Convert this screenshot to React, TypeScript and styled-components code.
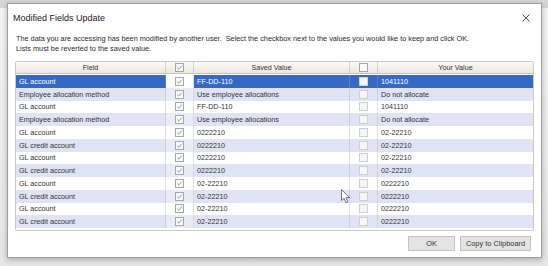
import styled, { createGlobalStyle } from "styled-components";

const GlobalStyle = createGlobalStyle`
  html, body {
    margin: 0;
    padding: 0;
    width: 548px;
    height: 266px;
    overflow: hidden;
    background: #ececec;
  }
  * {
    box-sizing: border-box;
  }
`;

type RowData = {
  field: string;
  saved: string;
  yours: string;
};

const rows: RowData[] = [
  { field: "GL account", saved: "FF-DD-110", yours: "1041110" },
  { field: "Employee allocation method", saved: "Use employee allocations", yours: "Do not allocate" },
  { field: "GL account", saved: "FF-DD-110", yours: "1041110" },
  { field: "Employee allocation method", saved: "Use employee allocations", yours: "Do not allocate" },
  { field: "GL account", saved: "0222210", yours: "02-22210" },
  { field: "GL credit account", saved: "0222210", yours: "02-22210" },
  { field: "GL account", saved: "0222210", yours: "02-22210" },
  { field: "GL credit account", saved: "0222210", yours: "02-22210" },
  { field: "GL account", saved: "02-22210", yours: "0222210" },
  { field: "GL credit account", saved: "02-22210", yours: "0222210" },
  { field: "GL account", saved: "02-22210", yours: "0222210" },
  { field: "GL credit account", saved: "02-22210", yours: "0222210" },
];

const Page = styled.div`
  position: relative;
  width: 548px;
  height: 266px;
  padding: 3px 6px 0 7px;
  font-family: "Liberation Sans", Arial, sans-serif;
  color: #333;
  background:
    linear-gradient(#d6d6d6 0 8px, transparent 8px),
    linear-gradient(to bottom, #f4f4f4, #e6e6e6);
`;

const Dialog = styled.div`
  width: 535px;
  height: 255px;
  background: #fff;
  border: 1px solid #9c9c9c;
  box-shadow: 0 2px 6px rgba(0, 0, 0, 0.25);
  display: flex;
  flex-direction: column;
  padding: 0 7px;
`;

const TitleBar = styled.div`
  height: 27px;
  display: flex;
  align-items: center;
  justify-content: space-between;
  padding-right: 4px;
  margin-left: -2px;
`;

const Title = styled.span`
  font-size: 9px;
  color: #222;
  padding-top: 1px;
`;

const CloseIcon = () => (
  <svg width="8" height="8" viewBox="0 0 8 8">
    <path d="M0.5 0.5 L7.5 7.5 M7.5 0.5 L0.5 7.5" stroke="#444" strokeWidth="0.9" />
  </svg>
);

const Description = styled.p`
  margin: 3px 0 0 1px;
  font-size: 7.3px;
  line-height: 10px;
  color: #2a2a2a;
`;

const Table = styled.div`
  margin-top: 7px;
  width: 519px;
  height: 170px;
  border: 1px solid #c9c9c9;
  border-radius: 2px;
  background: #fff;
`;

const Row = styled.div<{ $header?: boolean; $shade?: boolean; $selected?: boolean }>`
  display: grid;
  grid-template-columns: 150px 28px 156px 28px 1fr;
  height: ${(p) => (p.$header ? "12px" : "12.75px")};
  font-size: 7.2px;
  background: ${(p) =>
    p.$header
      ? "linear-gradient(#faf9f5, #ebe8de)"
      : p.$selected
      ? "#3669c4"
      : p.$shade
      ? "#dfe3f3"
      : "#fff"};
  color: ${(p) => (p.$selected ? "#fff" : "#333")};
  border-bottom: ${(p) => (p.$header ? "1px solid #c6c2b4" : "none")};
  margin-bottom: ${(p) => (p.$header ? "1px" : "0")};
`;

const Cell = styled.div<{ $center?: boolean; $divider?: boolean }>`
  display: flex;
  align-items: center;
  justify-content: ${(p) => (p.$center ? "center" : "flex-start")};
  padding-left: ${(p) => (p.$center ? "0" : "3px")};
  white-space: nowrap;
  overflow: hidden;
  border-right: ${(p) => (p.$divider ? "1px solid rgba(170, 170, 170, 0.35)" : "none")};
`;

const HeadCell = styled(Cell)`
  border-right: 1px solid #d4d0c2;
  color: #333;
`;

const CheckCell = styled.div<{ $bg: string }>`
  display: flex;
  align-items: center;
  justify-content: center;
  background: ${(p) => p.$bg};
  border-right: 1px solid rgba(170, 170, 170, 0.3);
`;

const Box = styled.span<{ $faint?: boolean }>`
  width: 9px;
  height: 9px;
  border: 1px solid ${(p) => (p.$faint ? "#cfcfcf" : "#a6a6a6")};
  background: ${(p) => (p.$faint ? "#f6f6f6" : "#fbfbfb")};
  display: flex;
  align-items: center;
  justify-content: center;
`;

const Check = () => (
  <svg width="7" height="7" viewBox="0 0 7 7">
    <path d="M1.2 3.6 L2.8 5.2 L5.9 1.6" fill="none" stroke="#8a8a8a" strokeWidth="0.9" />
  </svg>
);

const CheckBox = ({ checked, faint }: { checked?: boolean; faint?: boolean }) => (
  <Box $faint={faint}>{checked && <Check />}</Box>
);

const Footer = styled.div`
  display: flex;
  justify-content: flex-end;
  gap: 5px;
  margin-top: 5px;
  padding-right: 3px;
`;

const Button = styled.button<{ $w: number }>`
  width: ${(p) => p.$w}px;
  height: 15px;
  padding: 0;
  font-family: "Liberation Sans", Arial, sans-serif;
  font-size: 7.4px;
  color: #333;
  background: #e4e4e4;
  border: 1px solid #c4c4c4;
  border-radius: 0;
`;

const Cursor = styled.svg`
  position: absolute;
  left: 341px;
  top: 189px;
`;

export default function App() {
  return (
    <>
      <GlobalStyle />
      <Page>
        <Dialog>
          <TitleBar>
            <Title>Modified Fields Update</Title>
            <CloseIcon />
          </TitleBar>
          <Description>
            The data you are accessing has been modified by another user.&nbsp; Select the checkbox
            next to the values you would like to keep and click OK.
            <br />
            Lists must be reverted to the saved value.
          </Description>
          <Table>
            <Row $header>
              <HeadCell $center>Field</HeadCell>
              <HeadCell $center>
                <CheckBox checked />
              </HeadCell>
              <HeadCell $center>Saved Value</HeadCell>
              <HeadCell $center>
                <CheckBox />
              </HeadCell>
              <Cell $center>Your Value</Cell>
            </Row>
            {rows.map((r, i) => {
              const selected = i === 0;
              const shade = i % 2 === 1;
              const rowBg = selected ? "#3669c4" : shade ? "#dfe3f3" : "#fff";
              return (
                <Row key={i} $selected={selected} $shade={shade}>
                  <Cell $divider>{r.field}</Cell>
                  <CheckCell $bg={selected ? "#fff" : shade ? "#e9ecf7" : "#fff"}>
                    <CheckBox checked />
                  </CheckCell>
                  <Cell $divider>{r.saved}</Cell>
                  <CheckCell $bg={rowBg}>
                    <CheckBox faint />
                  </CheckCell>
                  <Cell>{r.yours}</Cell>
                </Row>
              );
            })}
          </Table>
          <Footer>
            <Button $w={47}>OK</Button>
            <Button $w={71}>Copy to Clipboard</Button>
          </Footer>
        </Dialog>
        <Cursor width="11" height="15" viewBox="0 0 11 15">
          <path
            d="M0.5 0.5 L0.5 11.5 L3 9.2 L5 13.8 L6.8 13 L4.9 8.6 L8.4 8.6 Z"
            fill="#fff"
            stroke="#555"
            strokeWidth="0.8"
            strokeLinejoin="round"
          />
        </Cursor>
      </Page>
    </>
  );
}
